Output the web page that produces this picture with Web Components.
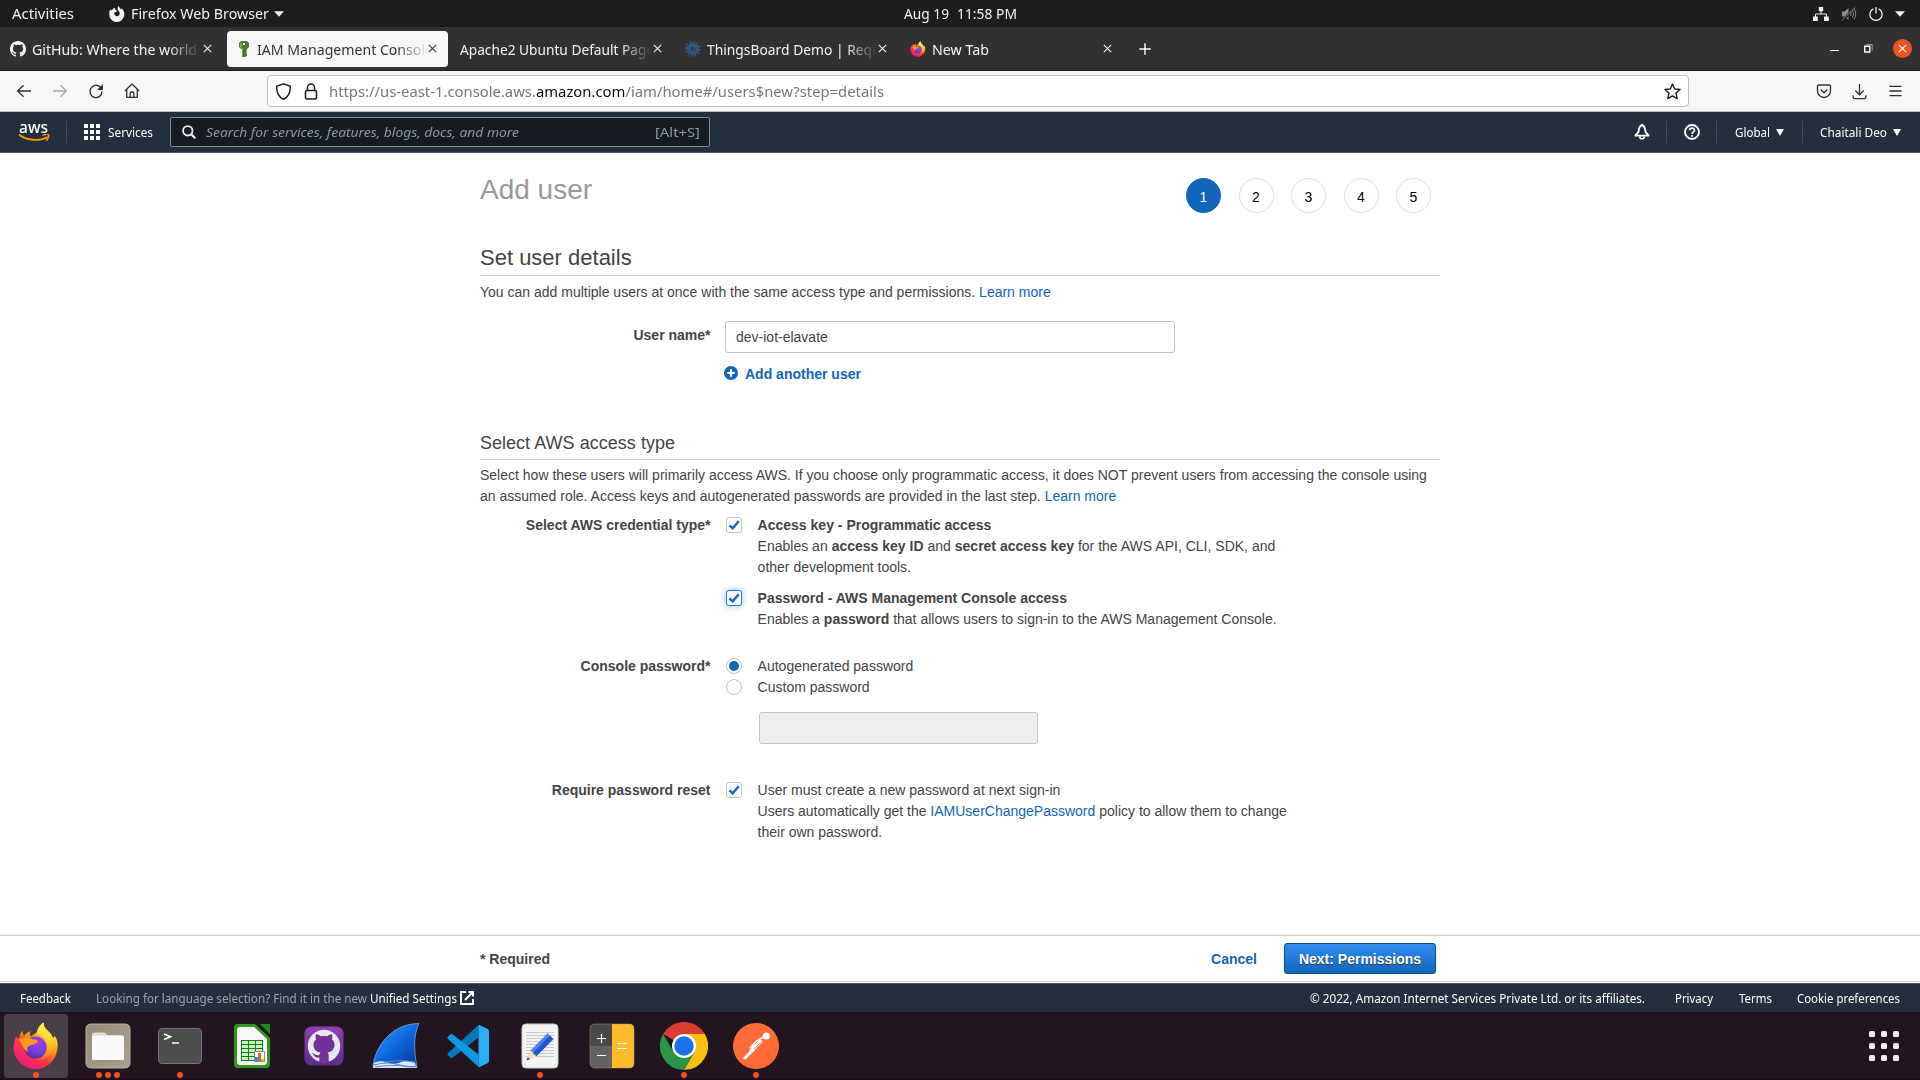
<!DOCTYPE html>
<html lang="en">
<head>
<meta charset="utf-8">
<title>IAM Management Console</title>
<style>
html,body{margin:0;width:1920px;height:1080px;overflow:hidden;background:#fff}
body{font-family:"Liberation Sans",Arial,sans-serif}
</style>
</head>
<body>
<desk-top></desk-top>
<script>
const ICONS = {
  ffmono:['0 0 16 16','<path fill="#f2f2f2" fill-rule="evenodd" d="M1.2 3.2 2 4.6 3.3 3.9C4 2.6 5 2 6 1.7L6.2 3.6 8 4.9C7.700 6 6.300 6 5.600 6.300 5.200 7 5.200 8 5.800 9 7 10.700 9.500 10.500 10.400 8.800 11.200 7.200 10.500 5.500 9.300 4.700L8.600 3.200 9 0C10.500 1 11.300 2.200 11.700 3.500L12.700 2.600C14.800 4.500 15.800 7 15.200 9.800 14.300 13.500 11.300 16 8 16 4 16 .8 13 .4 9.200.2 6.900.4 5 1.200 3.200Z"/>'],
  firefox:['0 0 48 48',`<defs><linearGradient id="a" x1=".8" y1=".1" x2=".2" y2="1"><stop offset="0" stop-color="#fff44f"/><stop offset=".35" stop-color="#ff980e"/><stop offset=".6" stop-color="#ff3647"/><stop offset="1" stop-color="#e31587"/></linearGradient><radialGradient id="b" cx=".6" cy=".25" r=".85"><stop offset="0" stop-color="#b833e1"/><stop offset=".5" stop-color="#7542e5"/><stop offset="1" stop-color="#492c95"/></radialGradient><linearGradient id="c" x1=".5" y1="0" x2=".5" y2="1"><stop offset="0" stop-color="#fff44f"/><stop offset=".5" stop-color="#ffd02f"/><stop offset="1" stop-color="#ff8a16" stop-opacity=".3"/></linearGradient></defs><path fill="url(#a)" d="M7 17C7.500 13 9 10 10.500 8.500 10.500 11 11.200 12.500 12.200 13.800 13.500 11.500 15.800 10 18.500 9.200 17.500 11 17.800 13 19 14.500L25 10C26 5 29 2 31.500.5 31.500 5 34.500 7.500 38 11 39.500 12.700 40.500 14.500 41 16.500L42.500 14C44.500 15.500 45.200 19 45.600 21 46.700 35 37 47 24 47 11 47 1.500 37 1.500 25.500 1.500 21 2.500 17 4.500 14.500 5 15.500 6 16.500 7 17Z"/><path fill="url(#c)" d="M31.500.5C31.500 5 34.500 7.500 38 11 42 16 43.500 24 39.500 31 36 38 28 40 21 37 32 38 38 28 34 19 32 14 27 14 25 10 26 5 29 2 31.500.5Z"/><circle cx="23.500" cy="25.500" r="11" fill="url(#b)"/><path fill="#ff9a20" d="M7 17C12 15.500 18 15 21 17.500 25 17 26 18.500 25.500 20 23 22.500 20 22.500 17 24 14.500 25.500 15 28 16.500 30 12 29 10 22 7 17Z"/>`],
  github:['0 0 16 16','<path fill="currentColor" d="M8 0C3.580 0 0 3.580 0 8c0 3.540 2.290 6.530 5.470 7.590.4.070.550-.170.550-.380 0-.190-.010-.820-.010-1.490-2.010.370-2.530-.490-2.690-.940-.090-.230-.480-.940-.820-1.130-.280-.150-.680-.520-.010-.530.630-.010 1.080.580 1.230.820.720 1.210 1.870.870 2.330.660.070-.520.280-.870.510-1.070-1.780-.200-3.640-.890-3.640-3.950 0-.870.310-1.590.820-2.150-.080-.200-.360-1.020.080-2.120 0 0 .670-.210 2.200.820.640-.180 1.320-.270 2-.270s1.360.090 2 .270c1.530-1.040 2.200-.820 2.200-.820.440 1.100.160 1.920.080 2.120.510.560.820 1.270.820 2.150 0 3.070-1.870 3.750-3.650 3.950.290.250.540.730.540 1.480 0 1.070-.010 1.930-.010 2.200 0 .210.150.460.550.380A8.010 8.010 0 0 0 16 8c0-4.420-3.580-8-8-8z"/>'],
  key:['0 0 10 16','<path fill="#4b7a2b" fill-rule="evenodd" d="M2 0H8L10 2V6L8 8V9L7 10 8 11 7 12 8 13V15L6 16H3V8H2L0 6V2ZM4 2V4H6V2Z"/><path fill="#7aa851" d="M1 2H3V7H4V15H3V8L1 6Z"/>'],
  tboard:['0 0 16 16','<g fill="none" stroke="#305680"><circle cx="8" cy="8" r="4.300" stroke-width="3.900"/><path stroke-width="1.300" d="M5 0 6 3M9 0V3M13 1 11 4M16 5 12 6M16 9H13M15 13 12 11M11 16 10 13M7 16V13M3 15 5 12M0 11 3 10M0 7H3M1 3 4 5"/></g><path d="M7 5.500Q10 4.500 9 7T7 10.500" fill="none" stroke="#305680" stroke-width="1.600"/>'],
  x:['0 0 9 9','<path d="M.8.8 8.200 8.200M8.200.8.8 8.200" stroke="currentColor" stroke-width="1.100" fill="none"/>'],
  plus:['0 0 12 12','<path d="M6 .3V11.700M.3 6H11.700" stroke="#fff" stroke-width="1.400"/>'],
  caret:['0 0 10 6','<path d="M0 .3H10L5 5.800Z" fill="#f2f2f2"/>'],
  net:['0 0 16 14','<path fill="#f2f2f2" d="M5.800 0H10.200V4.200H5.800ZM0 9.500H4.800V14H0ZM11 9.500H15.800V14H11Z"/><path d="M8 4V7M2.500 10V7H13.500V10" fill="none" stroke="#f2f2f2"/>'],
  mute:['0 0 16 14','<path fill="#8b8b8b" d="M1 4.500H3.500L7.500 1V13L3.500 9.500H1Z"/><path fill="none" stroke="#1d1d1d" stroke-width="2.500" d="M1 14 14 1"/><path fill="none" stroke="#858585" d="M9.500 5Q10.500 7 9.500 9M11.500 3.500Q13.500 7 11.500 10.500M13 1.500Q16.500 7 13 12.500M1 13.500 14 .5"/>'],
  power:['0 0 14 14','<path d="M4.300 1.800A6.100 6.100 0 1 0 9.700 1.800M7 0V6.500" fill="none" stroke="#f2f2f2" stroke-width="1.300"/>'],
  restore:['0 0 9 9','<path d="M.7 2.200H5.800V8H.7Z" fill="none" stroke="#fff" stroke-width="1.400"/><path d="M2.500.5H8.200V6.500" fill="none" stroke="#999"/>'],
  back:['0 0 16 16','<path d="M15 8H1.500M7.500 2.300 1.600 8 7.500 13.700" fill="none" stroke="currentColor" stroke-width="1.300"/>'],
  fwd:['0 0 16 16','<path d="M1 8H14.500M8.500 2.300 14.400 8 8.500 13.700" fill="none" stroke="currentColor" stroke-width="1.300"/>'],
  reload:['0 0 16 16','<path d="M14 8.500A6 6.200 0 1 1 12 3.800L14.200 6" fill="none" stroke="currentColor" stroke-width="1.400"/><path d="M14.900 1V7H9Z" fill="currentColor"/>'],
  home:['0 0 16 16','<path d="M.8 8 8 1 15.200 8M2.700 6.300V14.300H13.300V6.300M6.200 14V10.200Q6.200 9 7.400 9H8.600Q9.800 9 9.800 10.200V14" fill="none" stroke="currentColor" stroke-width="1.300" stroke-linejoin="round"/>'],
  shield:['0 0 16 16','<path d="M8 .8 14.500 3C14.500 9.500 12 13.500 8 15.300 4 13.500 1.500 9.500 1.500 3Z" fill="none" stroke="currentColor" stroke-width="1.400" stroke-linejoin="round"/>'],
  lock:['0 0 14 17','<rect x="1.500" y="7.500" width="11" height="8.500" rx="1.500" fill="none" stroke="currentColor" stroke-width="1.500"/><path d="M3.500 7.500V4.500A3.500 3.500 0 0 1 10.500 4.500V7.500" fill="none" stroke="currentColor" stroke-width="1.500"/>'],
  star:['0 0 16 16','<path d="M8 1 10.100 5.600 15.100 6.100 11.300 9.500 12.400 14.700 8 12.100 3.600 14.700 4.700 9.500.9 6.100 5.900 5.600Z" fill="none" stroke="currentColor" stroke-width="1.300" stroke-linejoin="round"/>'],
  pocket:['0 0 16 16','<path d="M1.500 3Q1.500 2 2.500 2H13.500Q14.500 2 14.500 3V8A6.500 6.500 0 0 1 1.500 8ZM4.700 6.500 8 9.800 11.300 6.500" fill="none" stroke="currentColor" stroke-width="1.350" stroke-linejoin="round"/>'],
  down:['0 0 16 17','<path d="M8 .5V12M3.500 7.500 8 12 12.500 7.500M1.200 12.500V14Q1.200 16 3.200 16H12.800Q14.800 16 14.800 14V12.500" fill="none" stroke="currentColor" stroke-width="1.350"/>'],
  menu:['0 0 14 12','<path d="M.5 1H13.500M.5 6H13.500M.5 11H13.500" stroke="currentColor" stroke-width="1.400"/>'],
  smile:['0 0 32 12','<path d="M1.500 1C9 6.500 22 7.500 29 3.200" fill="none" stroke="#f90" stroke-width="1.900" stroke-linecap="round"/><path d="M25 1.200C27.500.4 30.300.5 30.700 1 31.200 1.700 30.300 4.500 28.700 6.300" fill="none" stroke="#f90" stroke-width="1.400" stroke-linecap="round"/>'],
  grid:['0 0 16 16','<path fill="#fff" d="M0 0H4V4H0ZM6 0H10V4H6ZM12 0H16V4H12ZM0 6H4V10H0ZM6 6H10V10H6ZM12 6H16V10H12ZM0 12H4V16H0ZM6 12H10V16H6ZM12 12H16V16H12Z"/>'],
  search:['0 0 14 14','<circle cx="5.800" cy="5.800" r="4.700" fill="none" stroke="#e8eeee" stroke-width="1.800"/><path d="M9.200 9.200 13.300 13.300" stroke="#e8eeee" stroke-width="2.200"/>'],
  bell:['0 0 16 16','<path d="M8 1.500C5 1.500 5 4.500 4.700 7 4.400 9 2.600 10 1.300 11.600H14.700C13.400 10 11.600 9 11.300 7 11 4.500 11 1.500 8 1.500Z" fill="none" stroke="#fff" stroke-width="1.800" stroke-linejoin="round"/><path d="M8 0V2" stroke="#fff" stroke-width="2"/><path d="M5.700 12.500A2.300 2.300 0 0 0 10.300 12.500" fill="none" stroke="#fff" stroke-width="1.600"/>'],
  help:['0 0 16 16','<circle cx="8" cy="8" r="7" fill="none" stroke="#fff" stroke-width="1.900"/><path d="M5.600 6.300C5.600 3.400 10.500 3.400 10.500 6.200 10.500 7.900 8.100 8 8.100 9.900M8.100 11V12.800" fill="none" stroke="#fff" stroke-width="1.700"/>'],
  tri:['0 0 8 7','<path d="M0 0H8L4 7Z" fill="#fff"/>'],
  addc:['0 0 14 14','<circle cx="7" cy="7" r="7" fill="#1166bb"/><path d="M7 3.300V10.700M3.300 7H10.700" stroke="#fff" stroke-width="2.200"/>'],
  ext:['0 0 14 14','<path d="M6 1H1V13H13V8M8.500 1H13V5.500M13 1 5 9" fill="none" stroke="#fff" stroke-width="2"/>'],
  files:['0 0 48 48','<defs><linearGradient id="a" x2="1" y2="1"><stop stop-color="#958b78"/><stop offset="1" stop-color="#aaa290"/></linearGradient></defs><rect x="2" y="2" width="44" height="44" rx="4.500" fill="url(#a)" stroke="#b9b1a2"/><path fill="#dfdcd2" d="M8 12.500Q8 10.500 10 10.500H20Q21.500 10.500 22.500 12L23.500 13.500V20H8Z"/><path d="M8 15.500Q8 13.500 10 13.500H20L23.500 13.200H38Q40 13.200 40 15.200V36Q40 38.500 37.500 38.500H10.500Q8 38.500 8 36Z" fill="#fafafa"/><path d="M10 38.700H38" stroke="#817867" stroke-width=".8"/>'],
  term:['0 0 48 48','<rect x="2.500" y="6.500" width="43" height="35" rx="3.500" fill="#4c4c4c" stroke="#747474"/><path d="M8 12 14.500 14.700 8 17.500M16 21H23" fill="none" stroke="#fff" stroke-width="1.600"/>'],
  calc:['0 0 48 48','<path d="M6 6Q6 2 10 2H27L42 16V42Q42 46 38 46H10Q6 46 6 42Z" fill="#2c9a1a"/><path d="M9 8Q9 5 12 5H26L39 17V40Q39 43 36 43H12Q9 43 9 40Z" fill="#f6f6f6"/><path d="M32 2H42V12Z" fill="#1f8b12"/><path d="M13 18H35V39H13Z" fill="#14801c"/><path fill="#c9f1c0" d="M14 19H20V22H14ZM21 19H27V22H21ZM28 19H34V22H28ZM14 23H20V26H14ZM21 23H27V26H21ZM28 23H34V26H28ZM14 27H20V30H14ZM21 27H27V30H21ZM28 27H34V30H28ZM14 31H20V34H14ZM21 31H27V34H21ZM14 35H20V38H14ZM21 35H27V38H21Z"/><path d="M26.500 29.500H36.500V39.500H26.500Z" fill="#fff" stroke="#888"/><path d="M27 35H30V39H27Z" fill="#1c99e0"/><path d="M30 31H33V39H30Z" fill="#e3622b"/><path d="M33 37H36V39H33Z" fill="#f5c000"/>'],
  ghdesk:['0 0 48 48','<defs><linearGradient id="a" x2="0" y2="1"><stop stop-color="#9140b5"/><stop offset="1" stop-color="#5b2c8c"/></linearGradient></defs><rect x="4.500" y="4.500" width="39" height="39" rx="7" fill="url(#a)"/><circle cx="24" cy="24" r="16.200" fill="#e9e6ee"/><path fill="#713096" d="M19.300 40V35.500C14 36.500 14.500 32 11.500 31.300 14.500 30.700 15 34 19.300 33 19.500 32 20 31 20.500 30.500 12 29.500 12 20 16 17.500 15.500 15.500 15.500 13.500 16 12.300 18 12.300 19.500 13.500 20.700 14.300 23 13.800 25 13.800 27.300 14.300 28.500 13.500 30 12.300 32 12.300 32.500 13.500 32.500 15.500 32 17.500 36 20 36 29.500 27.500 30.500 28.500 31.500 28.700 32.500 28.700 34V40Q24 41 19.300 40Z"/>'],
  shark:['0 0 48 48','<defs><linearGradient id="a" x2="1" y2="1"><stop stop-color="#2aa0ff"/><stop offset=".5" stop-color="#0d68dd"/><stop offset="1" stop-color="#043393"/></linearGradient></defs><path fill="url(#a)" stroke="#8db8e8" stroke-width=".7" d="M1 45C3 24 20 1.500 47 1.500 41 13 42 30 45 45Z"/><path d="M2 41Q8 38 15 40.500T29 40T43 41L45 46H1Z" fill="#e0e9f7"/><path d="M2 43Q15 39 28 43T44 43M3 45Q18 42 44 45M12 40Q28 37 43 40" fill="none" stroke="#5887d0"/>'],
  vscode:['0 0 48 48','<path fill="#0876b9" d="M34.500 3 3.800 31.200Q2.800 32.200 3.800 33.300L6.500 35.700Q7.500 36.500 8.500 35.700L34.500 15.500Z"/><path fill="#0c98e2" d="M34.500 45 3.800 16.800Q2.800 15.800 3.800 14.700L6.500 12.300Q7.500 11.500 8.500 12.300L34.500 32.500Z"/><path fill="#29aef5" d="M34.500 3Q35 2.700 36 3.200L43.500 6.800Q45 7.500 45 9V39Q45 40.500 43.500 41.200L36 44.800Q35 45.300 34.500 45Z"/>'],
  edit:['0 0 48 48','<rect x="6" y="2" width="36" height="44" rx="4" fill="#f4f4f4" stroke="#c8c8c8"/><path stroke="#c8c8c8" d="M10 10.500H38M10 13.500H38M10 16.500H38M10 19.500H38M10 22.500H38M10 25.500H38M10 28.500H38M10 31.500H38M10 34.500H38"/><path fill="#f5dcb8" d="M10.500 38.500 14 28.500 20.500 34.500Z"/><path fill="#333" d="M10.500 38.500 11.800 35.200 14 37Z"/><path fill="#4b80ed" d="M14.500 28.500 31.500 11.300 35 14.500 18 31.500Z"/><path fill="#2053cf" d="M17 31 34 13.500 37.500 17 20.500 34.300Z"/>'],
  calculator:['0 0 48 48','<rect x="2" y="2" width="44" height="44" rx="4.500" fill="#626262"/><path d="M2 24V6.500Q2 2 6.500 2H24V24Z" fill="#484848"/><path d="M24 2H41.500Q46 2 46 6.500V41.500Q46 46 41.500 46H24Z" fill="#fcbb2b"/><path d="M9 16.500H18M13.500 12V21M9 33.500H18M29 21.500H39M29 26.500H39" stroke="#fff" stroke-width="1.200"/><rect x="2" y="2" width="44" height="44" rx="4.500" fill="none" stroke="#b69e68" stroke-opacity=".45"/>'],
  chrome:['0 0 48 48','<path fill="#dc3d31" d="M24 24 3.200 12A24 24 0 0 1 44.800 12H24Z"/><path fill="#fcc010" d="M24 12H44.800A24 24 0 0 1 24 48L34.400 30Z"/><path fill="#2a9748" d="M3.200 12A24 24 0 0 0 24 48L34.400 30 24 34 13.600 30Z"/><circle cx="24" cy="24" r="12" fill="#fff"/><circle cx="24" cy="24" r="9.700" fill="#1a73e8"/>'],
  postman:['0 0 48 48','<circle cx="24" cy="24" r="23" fill="#ff6c37"/><circle cx="34.300" cy="14" r="3.600" fill="#fff"/><path d="M31 15.500Q24 18 19 25L25 22.500 29.500 18" fill="none" stroke="#fff" stroke-width="1.500"/><path d="M29.500 18.500 18.500 29.500" stroke="#fff" stroke-width="3.800"/><path d="M20 28 11.500 36.500M22.500 27.500 13 37" stroke="#fff" stroke-width="1.500"/><path d="M10.500 36.500 15 35.500 13.500 37.500Z" fill="#fff"/><path d="M31 18 22 27" stroke="#ff6c37" stroke-width=".7"/>'],
  apps:['0 0 30 30','<g fill="#f0eeec"><rect width="6" height="6" rx="1.500"/><rect x="12" width="6" height="6" rx="1.500"/><rect x="24" width="6" height="6" rx="1.500"/><rect y="12" width="6" height="6" rx="1.500"/><rect x="12" y="12" width="6" height="6" rx="1.500"/><rect x="24" y="12" width="6" height="6" rx="1.500"/><rect y="24" width="6" height="6" rx="1.500"/><rect x="12" y="24" width="6" height="6" rx="1.500"/><rect x="24" y="24" width="6" height="6" rx="1.500"/></g>']
};

function element(name, html, setup){
  customElements.define(name, class extends HTMLElement{
    connectedCallback(){
      if(this.shadowRoot) return;
      this.attachShadow({mode:'open'});
      this.shadowRoot.innerHTML = typeof html === 'function' ? html(this) : html;
      if(setup) setup(this);
    }
  });
}

/* <ui-icon name w h ml> : inline vector icon with an optional left gap */
element('ui-icon', el => {
  const [box, body] = ICONS[el.getAttribute('name')];
  const w = el.getAttribute('w'), h = el.getAttribute('h') || w, ml = el.getAttribute('ml') || 0;
  return `<style>:host{display:block;flex:none;width:${w}px;height:${h}px;margin-left:${ml}px}svg{display:block}</style><svg width="${w}" height="${h}" viewBox="${box}">${body}</svg>`;
});

/* <fit-text w ml> : one line of text condensed to a fixed measure */
element('fit-text', el => `<style>:host{display:block;flex:none;width:${el.getAttribute('w')}px;margin-left:${el.getAttribute('ml')||0}px;white-space:nowrap}span{display:inline-block;transform-origin:0 50%}</style><span><slot></slot></span>`, el => {
  const s = el.shadowRoot.querySelector('span');
  const n = s.getBoundingClientRect().width;
  if(n) s.style.transform = `scaleX(${el.getAttribute('w')/n})`;
});

element('top-panel', `<style>
:host{display:flex;align-items:center;height:27px;background:#1d1d1d;color:#f2f2f2;font:14.600px/24px "Noto Sans",sans-serif}
fit-text{padding-bottom:2px}
</style>
<fit-text w="62" ml="12">Activities</fit-text><ui-icon name="ffmono" w="16" ml="35"></ui-icon>
<fit-text w="138" ml="6">Firefox Web Browser</fit-text><ui-icon name="caret" w="10" h="6" ml="5"></ui-icon>
<fit-text w="45" ml="620">Aug 19</fit-text><fit-text w="60" ml="8">11:58 PM</fit-text>
<ui-icon name="net" w="16" h="14" ml="796"></ui-icon><ui-icon name="mute" w="16" h="14" ml="12"></ui-icon><ui-icon name="power" w="14" h="14" ml="12"></ui-icon><ui-icon name="caret" w="10" h="6" ml="12"></ui-icon>`);

/* <browser-tab> : box width comes from the tab strip, title fades out under the close button */
element('browser-tab', el => {
  const on = el.hasAttribute('active'), a = n => el.getAttribute(n);
  const icon = a('icon');
  return `<style>
:host{display:flex;box-sizing:border-box;flex:none;align-items:center;height:36px;border-radius:4px;padding-left:${a('pad')}px;padding-right:${a('end')}px;width:${a('w')}px;color:${on?'#363234':'#f4f4f4'};background:${on?'#f7f7f7':'none'};font:14.600px/36px "Noto Sans",sans-serif}
.t{flex:1;min-width:0;overflow:hidden;margin-left:${a('gap')}px;${el.hasAttribute('whole')?'':'-webkit-mask-image:linear-gradient(90deg,#000 calc(100% - 32px),transparent);mask-image:linear-gradient(90deg,#000 calc(100% - 32px),transparent)'}}
</style>${icon?`<ui-icon name="${icon}" w="${a('iw')}" h="16"></ui-icon>`:''}<div class="t"><fit-text w="${a('tw')}"><slot></slot></fit-text></div><ui-icon name="x" w="9" ml="${a('xg')}"></ui-icon>`;
});

element('tab-strip', `<style>
:host{display:flex;align-items:center;box-sizing:border-box;height:44px;background:#333031;border-bottom:1px solid #201e1f;color:#fff}
.min{width:9px;height:1.500px;background:#fff;margin:4px 0 0 679px}
.close{display:flex;align-items:center;justify-content:center;width:19px;height:19px;border-radius:50%;background:#e95420;margin-left:20px}
</style>
<browser-tab icon="github" iw="16" w="227" pad="10" gap="6" tw="165" xg="3" end="15">GitHub: Where the world</browser-tab>
<browser-tab active icon="key" iw="10" w="221" pad="12" gap="8" tw="176" xg="0" end="11">IAM Management Console</browser-tab>
<browser-tab w="225" pad="12" gap="0" tw="211" xg="1" end="11">Apache2 Ubuntu Default Page: It</browser-tab>
<browser-tab icon="tboard" iw="16" w="225" pad="12" gap="6" tw="193" xg="1" end="11">ThingsBoard Demo | Request</browser-tab>
<browser-tab whole icon="firefox" iw="16" w="225" pad="12" gap="6" tw="57" xg="8" end="11">New Tab</browser-tab>
<ui-icon name="plus" w="12" ml="16"></ui-icon>
<div class="min"></div><ui-icon name="restore" w="9" ml="25"></ui-icon><div class="close"><ui-icon name="x" w="9"></ui-icon></div>`);

element('address-bar', `<style>
:host{display:flex;align-items:center;box-sizing:border-box;height:41px;background:#f7f7f7;border-bottom:1px solid #bdbdbd;color:#303030}
.off{color:#a5a5a5}
.url{display:flex;align-items:center;box-sizing:border-box;width:1422px;height:32px;margin-left:127px;border:1px solid #bcbcbc;border-radius:4px;background:#fff;color:#1c1c1c;font:15.200px/28px "Noto Sans",sans-serif}
fit-text{color:#777}b{font-weight:400;color:#0c0c0d}
</style>
<ui-icon name="back" w="16" ml="16"></ui-icon><ui-icon class="off" name="fwd" w="16" ml="20"></ui-icon><ui-icon name="reload" w="16" ml="20"></ui-icon><ui-icon name="home" w="16" ml="20"></ui-icon>
<div class="url"><ui-icon name="shield" w="17" ml="7"></ui-icon><ui-icon name="lock" w="14" h="17" ml="12"></ui-icon><fit-text w="555" ml="11">https://us-east-1.console.aws.<b>amazon.com</b>/iam/home#/users$new?step=details</fit-text><ui-icon name="star" w="17" ml="780"></ui-icon></div>
<ui-icon name="pocket" w="16" ml="127"></ui-icon><ui-icon name="down" w="15" h="17" ml="20"></ui-icon><ui-icon name="menu" w="13" h="12" ml="22"></ui-icon>`);

element('aws-nav', `<style>
:host{display:flex;align-items:center;box-sizing:border-box;height:41px;background:#232f3e;border-bottom:1px solid #4f5965;color:#fff;font:12px/20px "Noto Sans",sans-serif}
:host>fit-text{padding-top:1px}
.logo{width:32px;height:24px;margin-left:18px;display:flex;flex-direction:column}
.logo fit-text{font:500 16px/15px "Noto Sans",sans-serif;height:14px}
i.s{width:1px;height:22px;background:#414c58}
.q{display:flex;align-items:center;box-sizing:border-box;width:540px;height:30px;margin-left:17px;border:1px solid #81908f;border-radius:2px;background:#161b22;color:#8b9b9b;font-size:13.400px;font-style:italic}
.q .k{font-style:normal}
</style>
<div class="logo"><fit-text w="29" ml="1">aws</fit-text><ui-icon name="smile" w="32" h="12"></ui-icon></div>
<i class="s" style="margin-left:16px"></i><ui-icon name="grid" w="16" ml="17"></ui-icon><fit-text w="45" ml="8">Services</fit-text>
<div class="q"><ui-icon name="search" w="14" ml="11"></ui-icon><fit-text w="313" ml="10">Search for services, features, blogs, docs, and more</fit-text><fit-text class="k" w="45" ml="136">[Alt+S]</fit-text></div>
<ui-icon name="bell" w="16" ml="924"></ui-icon><i class="s" style="margin-left:16px"></i><ui-icon name="help" w="16" ml="17"></ui-icon><i class="s" style="margin-left:16px"></i>
<fit-text w="35" ml="18">Global</fit-text><ui-icon name="tri" w="8" h="7" ml="6"></ui-icon><i class="s" style="margin-left:18px"></i><fit-text w="67" ml="17">Chaitali Deo</fit-text><ui-icon name="tri" w="8" h="7" ml="6"></ui-icon>`);

element('step-list', () => `<style>
:host{display:flex;gap:17.500px}
span{display:flex;justify-content:center;box-sizing:border-box;width:35px;height:35px;border-radius:50%;border:1px solid #e0e0e0;font-size:14px;line-height:36px;color:#000}
.on{background:#1166bb;border-color:#1166bb;color:#fff}
</style>${[1,2,3,4,5].map(n=>`<span class="${n===1?'on':''}">${n}</span>`).join('')}`);

element('check-mark', el => {
  const r = el.hasAttribute('radio'), c = el.hasAttribute('checked'), f = el.hasAttribute('focus');
  return `<style>
:host{display:flex;flex:none;box-sizing:border-box;align-items:center;justify-content:center;width:16px;height:16px;border:1px solid ${f?'#1a77dd':'#c4c4c4'};border-radius:${r?'50%':'3px'};background:#fff;${f?'box-shadow:0 0 6px #8fc0f5;':''}}
i{width:10px;height:10px;border-radius:50%;background:#1166bb}
</style>${!c?'':r?'<i></i>':'<svg width="12" height="12" viewBox="0 0 12 12"><path d="M1.500 6.300 4.700 9.300 10.800 2.300" fill="none" stroke="#1166bb" stroke-width="2.500"/></svg>'}`;
});

/* <form-row label> : right-aligned caption beside its controls */
element('form-row', el => `<style>
:host{display:flex}
.l{flex:none;width:230.500px;text-align:right;font-weight:700;padding-top:var(--label-top,0)}
.c{margin-left:var(--gap,15.500px);flex:1}
</style><div class="l">${el.getAttribute('label')}</div><div class="c"><slot></slot></div>`);

element('choice-item', el => `<style>
:host{display:flex}
check-mark{margin:2px 15.600px 0 0}
</style><check-mark ${['radio','checked','focus'].filter(a=>el.hasAttribute(a)).join(' ')}></check-mark><div><slot></slot></div>`);

element('user-wizard', `<style>
:host{display:block;box-sizing:border-box;height:782px;width:960px;margin:0 auto;padding-top:21px;color:#444;font-size:14px;line-height:21px}
header{display:flex;justify-content:space-between;height:72px}
step-list{margin:4px 9px 0 0}
h1,h2,h3,p{margin:0;font-weight:400}
h1{font-size:28px;line-height:32px;color:#999}
h2{font-size:22px;line-height:24px;height:29px;border-bottom:1px solid #ccc}
h3{font-size:18px;line-height:21px;height:26px;border-bottom:1px solid #ccc;margin-top:48px;word-spacing:.2px}
a{color:#1166bb}
.f{box-sizing:border-box;width:450px;height:32px;border:1px solid #c4c4c4;border-radius:3px;padding:5px 10px;line-height:21px}
.add{display:flex;align-items:center;margin:11px 0 0 -1px;gap:7px;color:#1166bb;font-weight:700}
.add ui-icon{padding-bottom:3px}
.dis{width:279px;background:#eee;margin:14px 0 0 33px}
</style>
<header><h1>Add user</h1><step-list></step-list></header>
<h2>Set user details</h2>
<p style="margin-top:6px">You can add multiple users at once with the same access type and permissions. <a>Learn more</a></p>
<form-row label="User name*" style="margin-top:18px;--label-top:4px;--gap:14.500px"><div class="f">dev-iot-elavate</div><div class="add"><ui-icon name="addc" w="14"></ui-icon>Add another user</div></form-row>
<h3>Select AWS access type</h3>
<p style="margin-top:5px;word-spacing:.03px">Select how these users will primarily access AWS. If you choose only programmatic access, it does NOT prevent users from accessing the console using<br>an assumed role. Access keys and autogenerated passwords are provided in the last step. <a>Learn more</a></p>
<form-row label="Select AWS credential type*" style="margin-top:8px">
<choice-item checked style="word-spacing:.04px"><b>Access key - Programmatic access</b><br>Enables an <b>access key ID</b> and <b>secret access key</b> for the AWS API, CLI, SDK, and<br>other development tools.</choice-item>
<choice-item checked focus style="margin-top:10px;word-spacing:.04px"><b>Password - AWS Management Console access</b><br>Enables a <b>password</b> that allows users to sign-in to the AWS Management Console.</choice-item></form-row>
<form-row label="Console password*" style="margin-top:26px"><choice-item radio checked>Autogenerated password</choice-item><choice-item radio>Custom password</choice-item><div class="f dis"></div></form-row>
<form-row label="Require password reset" style="margin-top:36px"><choice-item checked>User must create a new password at next sign-in<br>Users automatically get the <a>IAMUserChangePassword</a> policy to allow them to change<br>their own password.</choice-item></form-row>`);

element('action-bar', `<style>
:host{display:block;box-sizing:border-box;height:47px;border-top:1px solid #d0d0d0;border-bottom:1px solid #ccc;font-size:14px;font-weight:700;color:#444;margin-bottom:1px;box-shadow:0 -1px 1px #eee}
div{width:960px;height:45px;margin:0 auto;display:flex;align-items:center;box-sizing:border-box;padding-right:4px}
a{margin-left:auto;color:#1166bb;margin-right:27px}
span,a{line-height:17px;padding-top:2px}
button{box-sizing:border-box;width:152px;height:31px;padding:1px 0 0;border:1px solid #0d4c8c;border-radius:3px;background:linear-gradient(#308ef0,#1166bb);color:#fff;font:700 14px/28px "Liberation Sans",sans-serif;text-shadow:0 1px 1px #333}
</style><div><span>* Required</span><a>Cancel</a><button>Next: Permissions</button></div>`);

element('aws-footer', `<style>
:host{display:flex;align-items:center;box-sizing:border-box;height:29px;background:#232f3e;color:#fff;font:12px/28px "Noto Sans",sans-serif;border-top:1px solid #47515e}
fit-text{padding-top:1px}
.m{color:#9ba7a8}
</style><fit-text w="51" ml="20">Feedback</fit-text><fit-text class="m" w="271" ml="25">Looking for language selection? Find it in the new</fit-text><fit-text w="87" ml="3">Unified Settings</fit-text><ui-icon name="ext" w="14" ml="3"></ui-icon>
<fit-text w="335" ml="836">© 2022, Amazon Internet Services Private Ltd. or its affiliates.</fit-text><fit-text w="38" ml="30">Privacy</fit-text><fit-text w="33" ml="26">Terms</fit-text><fit-text w="103" ml="25">Cookie preferences</fit-text>`);

element('dock-app', el => `<style>
:host{display:flex;flex:none;flex-direction:column;align-items:center;box-sizing:border-box;width:64px;height:64px;padding-top:8px;border-radius:4px;background:${el.hasAttribute('active')?'#4a3e48':'none'}}
div{display:flex;gap:3px;margin-top:2px}i{width:6px;height:6px;border-radius:50%;background:#e95420}
</style><ui-icon name="${el.getAttribute('icon')}" w="48"></ui-icon><div>${'<i></i>'.repeat(+el.getAttribute('windows')||0)}</div>`);

element('app-dock', `<style>
:host{display:flex;box-sizing:border-box;height:68px;padding:2px 21px 0 4px;gap:8px;background:#22151f;border-bottom:1px solid #170d14}
.end{margin-left:auto;padding-top:17px}
</style>
<dock-app icon="firefox" active windows="1"></dock-app><dock-app icon="files" windows="3"></dock-app><dock-app icon="term" windows="1"></dock-app><dock-app icon="calc"></dock-app><dock-app icon="ghdesk"></dock-app><dock-app icon="shark"></dock-app><dock-app icon="vscode"></dock-app><dock-app icon="edit" windows="1"></dock-app><dock-app icon="calculator"></dock-app><dock-app icon="chrome" windows="1"></dock-app><dock-app icon="postman" windows="1"></dock-app>
<div class="end"><ui-icon name="apps" w="30"></ui-icon></div>`);

element('desk-top', `<style>:host{display:flex;flex-direction:column;width:1920px;height:1080px;background:#fff}:host>*{flex:none}</style>
<top-panel></top-panel><tab-strip></tab-strip><address-bar></address-bar><aws-nav></aws-nav><user-wizard></user-wizard><action-bar></action-bar><aws-footer></aws-footer><app-dock></app-dock>`);
</script>
</body>
</html>
